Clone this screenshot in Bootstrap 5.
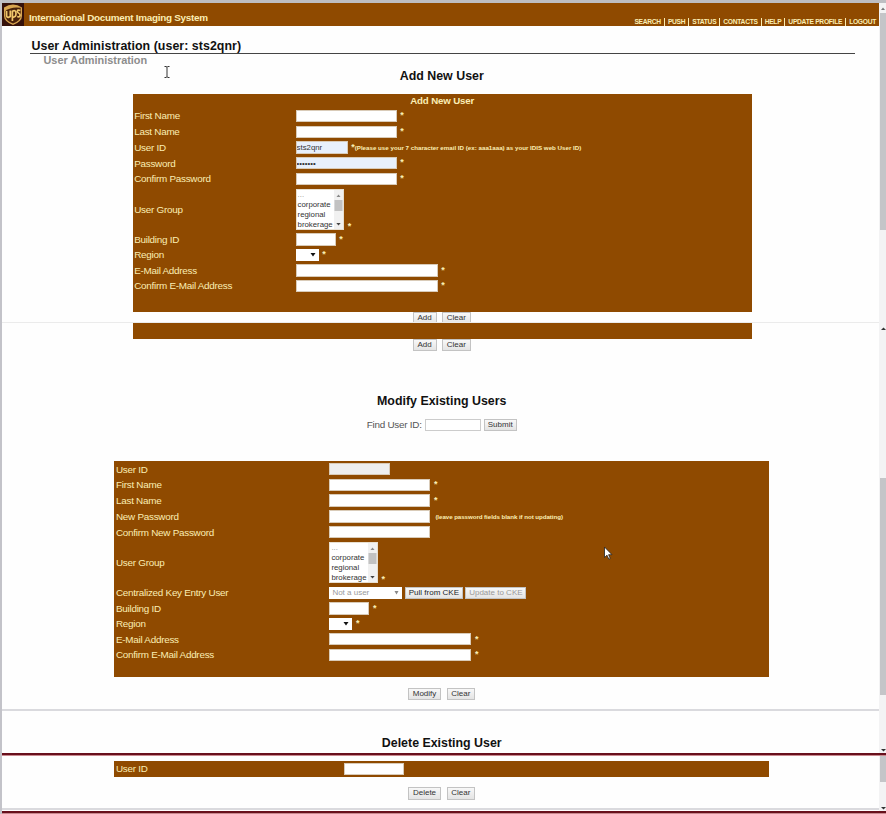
<!DOCTYPE html>
<html lang="en">
<head>
<meta charset="utf-8">
<title>International Document Imaging System</title>
<link href="https://cdn.jsdelivr.net/npm/bootstrap@5.3.0/dist/css/bootstrap.min.css" rel="stylesheet">
<style>
:root{--brown:#8f4a00;--cream:#fbeeb4}
body{font-family:"Liberation Sans",Arial,sans-serif;font-size:9.35px;line-height:1;background:#fefefe;color:#111;width:886px;height:814px;overflow:hidden}
.screen{height:814px;border-left:2px solid #c3c3c9}
.pane{width:877px}
.pane-a{height:322px}.pane-b{height:433px}.pane-c{height:59px}
.track{width:7px;background:#f3f3f4}
.track svg{display:block}
.topband{height:3px;background:#bdbec2}
.bar{height:23px;background:var(--brown);color:var(--cream)}
.brand-name{font-size:9.9px;letter-spacing:-.27px;padding:6px 0 0 5px}
.links{font-size:6.7px;letter-spacing:-.29px;padding:14px 3px 0 0}
.links a{color:var(--cream);text-decoration:none;padding:0 3px;border-left:1px solid var(--cream);line-height:8px}
.links a:first-child{border:0}
.links a:last-child{padding-right:0}
.page-title{font-size:12.4px;margin:12.5px 24px 0 28px;padding-left:1.5px;height:15px;border-bottom:1px solid #444;line-height:14px;letter-spacing:.04px}
.crumb{font-size:10.9px;color:#8d8d8d;padding:0 0 0 41.5px;height:15px;line-height:12px}
.heading{font-size:12.4px;line-height:14px;text-align:center;margin:0;font-weight:700;padding-left:2.5px}
.sheet{background:var(--brown);color:var(--cream)}
.sheet-add{width:619.2px;margin-left:130.6px;height:217.5px}
.first-sheet{margin-top:11.5px}
.sheet-mod{width:655px;margin-left:112.4px;height:216px}
.sheet-head{font-size:9.7px;letter-spacing:-.15px;height:14px;line-height:14px}
.line{height:15.75px;padding-left:1.6px;padding-top:.2px}
.line-s{height:15.4px}
.line-g{height:45px;padding-top:0}
.name{width:161.400px;flex:none;font-size:9.9px;letter-spacing:-.26px;line-height:11px}
.sheet-mod .name{width:213.400px}
.sheet-del .name{width:227.6px}
.fld{height:12.4px;border:1px solid #d9cbb8;border-radius:0;padding:0;font-size:7.8px;line-height:10px;color:#333;background:#fff;flex:none}
.fld-auto{background:#e8f0fc}
.fld-off{background:#eee}
.w101{width:101px}.w52{width:52px}.w60{width:60.5px}.w40{width:40px}.w142{width:142px}.w56{width:56px}
.req{font-size:9px;font-weight:700;padding-left:3.6px;align-self:flex-start;line-height:10px;padding-top:2px}
.line-g .req{align-self:flex-end;padding-bottom:1px}
.note{font-size:6.2px;font-weight:700;padding-top:1px}
.note-b{letter-spacing:-.07px;padding-left:5px}
.pick{width:48.5px;height:40.5px;background:#fff;color:#333;font-size:7.8px;border:1px solid #e8dfd0}
.pick span{display:block;line-height:9.9px;padding-left:1px}
.pick i{width:9px;background:#f1f1f1;display:block}
.drop{width:23px;height:11.5px;background:#fff}
.drop-w{width:73px;height:12px;background:#fff;color:#999;font-size:8px;line-height:12px;padding-left:3px}
.push{height:12.6px;font-size:8px;line-height:10.6px;border:1px solid #c3c3c3;border-radius:0;background:linear-gradient(#f8f8f8,#e4e4e4);color:#333;padding:0;text-align:center;flex:none}
.p24{width:24px}.p28{width:28.5px}.p33{width:33px}.p58{width:58px}.p61{width:61px}
.rule-l{height:1.5px;background:#dadade}
.rule-red{height:2px;background:#68101c;border-bottom:1px solid #c9898f;width:884px;position:relative;box-sizing:content-box}
.acts{gap:5.5px;padding-left:2px}
.rule-soft{background:#ebebeb;height:1px}
.tail{height:15.5px}
.head-mod{margin-top:42.5px}
.find{margin-top:10.5px;height:14px;color:#555;padding-left:2.5px}
.find label{margin-right:3px;font-size:9.9px;letter-spacing:-.25px}
.find .fld{border-color:#ccc;margin-right:3px}
.find + .sheet-mod{margin-top:29px}
.acts-mod{margin-top:10.5px}
.rule-mid{margin-top:9px}
.head-del{margin-top:25.5px;height:17px}
.cke{margin-left:2.5px}
.off{color:#999}
.sheet-mod.sheet-del{height:16px;margin-top:6px}
.acts-del{margin-top:10px}
.rule-end{margin-top:8.5px;margin-bottom:1.5px}
.mouse{position:absolute;display:block}
.ibeam{left:163px;top:65px}
.arrow{left:603px;top:546px}
</style>
</head>
<body>
<div class="screen">

<section class="d-flex pane-a overflow-hidden">
 <div class="pane">
  <div class="topband"></div>
  <header class="bar d-flex">
   <svg width="22" height="23" viewBox="0 0 22 23"><rect width="22" height="23" fill="#35110a"/><path d="M2 4.500Q11-1.500 20 4.500V13Q20 18.500 11 22Q2 18.500 2 13Z" fill="#d9a650"/><path d="M3.300 8Q9 3.300 18.700 4.700V13Q18.500 17.500 11 20.500Q3.500 17.500 3.300 13Z" fill="#4a220b"/><path d="M4.600 8V12.500Q4.600 14.500 6.500 14.300L8.300 13.500V7.500M10.400 18V8.200Q14 6.400 14 10.500Q14 14.700 10.600 13.900M18.300 7.500Q15.200 6.300 15.400 8.500C15.500 10.500 18.300 9.800 18.100 12.300Q17.800 14.500 15.200 13.500" fill="none" stroke="#f0c66c" stroke-width="1.700"/></svg>
   <div class="d-flex align-items-center fw-bold brand-name">International Document Imaging System</div>
   <nav class="links d-flex align-items-center fw-bold ms-auto"><a href="#">SEARCH</a><a href="#">PUSH</a><a href="#">STATUS</a><a href="#">CONTACTS</a><a href="#">HELP</a><a href="#">UPDATE PROFILE</a><a href="#">LOGOUT</a></nav>
  </header>
  <div class="page-title fw-bold">User Administration (user: sts2qnr)</div>
  <div class="crumb fw-bold">User Administration</div>
  <h2 class="heading">Add New User</h2>
  <form class="sheet sheet-add first-sheet">
   <div class="text-center fw-bold sheet-head">Add New User</div>
   <div class="line d-flex align-items-center"><label class="name">First Name</label><input class="fld w101"><span class="req">*</span></div>
   <div class="line d-flex align-items-center"><label class="name">Last Name</label><input class="fld w101"><span class="req">*</span></div>
   <div class="line d-flex align-items-center"><label class="name">User ID</label><input class="fld fld-auto w52" value="sts2qnr"><span class="req">*</span><span class="note">(Please use your 7 character email ID (ex: aaa1aaa) as your IDIS web User ID)</span></div>
   <div class="line d-flex align-items-center"><label class="name">Password</label><input class="fld fld-auto w101" value="•••••••"><span class="req">*</span></div>
   <div class="line d-flex align-items-center"><label class="name">Confirm Password</label><input class="fld w101"><span class="req">*</span></div>
   <div class="line line-g d-flex align-items-center"><label class="name">User Group</label><div class="pick d-flex justify-content-between"><div><span class="text-black-50">...</span><span>corporate</span><span>regional</span><span>brokerage</span></div><i><svg width="9" height="39"><path d="M2.500 7L4.500 4.500L6.500 7Z" fill="#888"/><rect x=".5" y="10" width="8" height="11" fill="#c2c2c2"/><path d="M2.300 33H6.700L4.500 35.500Z" fill="#444"/></svg></i></div><span class="req">*</span></div>
   <div class="line line-s d-flex align-items-center"><label class="name">Building ID</label><input class="fld w40"><span class="req">*</span></div>
   <div class="line line-s d-flex align-items-center"><label class="name">Region</label><div class="drop"><svg width="23" height="11"><path d="M14.500 4H19.500L17 7.500Z" fill="#111"/></svg></div><span class="req">*</span></div>
   <div class="line line-s d-flex align-items-center"><label class="name">E-Mail Address</label><input class="fld w142"><span class="req">*</span></div>
   <div class="line d-flex align-items-center"><label class="name">Confirm E-Mail Address</label><input class="fld w142"><span class="req">*</span></div>
  </form>
  <div class="acts d-flex justify-content-center"><button class="push p24">Add</button><button class="push p28">Clear</button></div>
 </div>
 <div class="track"><svg width="7" height="322"><rect width="7" height="3" fill="#bdbec2"/><path d="M2 10L4 7.500L6 10Z" fill="#777"/><rect x="1" y="13" width="6" height="217" fill="#c4c5c8"/></svg></div>
</section>

<section class="d-flex pane-b">
 <div class="pane">
  <div class="rule-l rule-soft"></div>
  <div class="sheet sheet-add tail"></div>
  <div class="acts d-flex justify-content-center"><button class="push p24">Add</button><button class="push p28">Clear</button></div>
  <h2 class="heading head-mod">Modify Existing Users</h2>
  <div class="find d-flex justify-content-center align-items-center"><label>Find User ID:</label><input class="fld w56"><button class="push p33">Submit</button></div>
  <form class="sheet sheet-mod">
   <div class="line d-flex align-items-center"><label class="name">User ID</label><input class="fld fld-off w60" disabled></div>
   <div class="line d-flex align-items-center"><label class="name">First Name</label><input class="fld w101"><span class="req">*</span></div>
   <div class="line d-flex align-items-center"><label class="name">Last Name</label><input class="fld w101"><span class="req">*</span></div>
   <div class="line d-flex align-items-center"><label class="name">New Password</label><input class="fld w101"><span class="note note-b">(leave password fields blank if not updating)</span></div>
   <div class="line d-flex align-items-center"><label class="name">Confirm New Password</label><input class="fld w101"></div>
   <div class="line line-g d-flex align-items-center"><label class="name">User Group</label><div class="pick d-flex justify-content-between"><div><span class="text-black-50">...</span><span>corporate</span><span>regional</span><span>brokerage</span></div><i><svg width="9" height="39"><path d="M2.500 7L4.500 4.500L6.500 7Z" fill="#888"/><rect x=".5" y="10" width="8" height="11" fill="#c2c2c2"/><path d="M2.300 33H6.700L4.500 35.500Z" fill="#444"/></svg></i></div><span class="req">*</span></div>
   <div class="line d-flex align-items-center"><label class="name">Centralized Key Entry User</label><div class="drop-w d-flex justify-content-between">Not a user<svg width="10" height="12"><path d="M2.500 4H6.500L4.500 7.500Z" fill="#888"/></svg></div><button type="button" class="push p58 text-dark cke">Pull from CKE</button><button type="button" class="push p61 cke off">Update to CKE</button></div>
   <div class="line line-s d-flex align-items-center"><label class="name">Building ID</label><input class="fld w40"><span class="req">*</span></div>
   <div class="line line-s d-flex align-items-center"><label class="name">Region</label><div class="drop"><svg width="23" height="11"><path d="M14.500 4H19.500L17 7.500Z" fill="#111"/></svg></div><span class="req">*</span></div>
   <div class="line line-s d-flex align-items-center"><label class="name">E-Mail Address</label><input class="fld w142"><span class="req">*</span></div>
   <div class="line d-flex align-items-center"><label class="name">Confirm E-Mail Address</label><input class="fld w142"><span class="req">*</span></div>
  </form>
  <div class="acts acts-mod d-flex justify-content-center"><button class="push p33">Modify</button><button class="push p28">Clear</button></div>
  <div class="rule-l rule-mid"></div>
  <h2 class="heading head-del">Delete Existing User</h2>
  <div class="rule-red"></div>
 </div>
 <div class="track"><svg width="7" height="431"><path d="M2 8L4.500 5.500L7 8Z" fill="#333"/><rect x="1" y="156" width="6" height="217" fill="#c4c5c8"/><path d="M2 427H7L4.500 429.500Z" fill="#333"/></svg></div>
</section>

<section class="d-flex pane-c">
 <div class="pane">
  <form class="sheet sheet-mod sheet-del"><div class="line d-flex align-items-center"><label class="name">User ID</label><input class="fld w60"></div></form>
  <div class="acts acts-del d-flex justify-content-center"><button class="push p33">Delete</button><button class="push p28">Clear</button></div>
  <div class="rule-l rule-end"></div>
  <div class="rule-red"></div>
 </div>
 <div class="track"><svg width="7" height="57"><rect x="1" y="1" width="6" height="26" fill="#c4c5c8"/><path d="M2 52H7L4.500 54.500Z" fill="#333"/></svg></div>
</section>
</div>

<svg class="mouse ibeam" width="8" height="14"><path d="M1.500 1.500H3.300L4 2.200L4.700 1.500H6.500M4 2V12M1.500 12.500H3.300L4 11.800L4.700 12.500H6.500" fill="none" stroke="#333"/></svg>
<svg class="mouse arrow" width="10" height="15"><path d="M1.500 1V11.500L4 9.200L5.800 13.200L7.300 12.500L5.600 8.700H9Z" fill="#fff" stroke="#222" stroke-width=".8"/></svg>
</body>
</html>
